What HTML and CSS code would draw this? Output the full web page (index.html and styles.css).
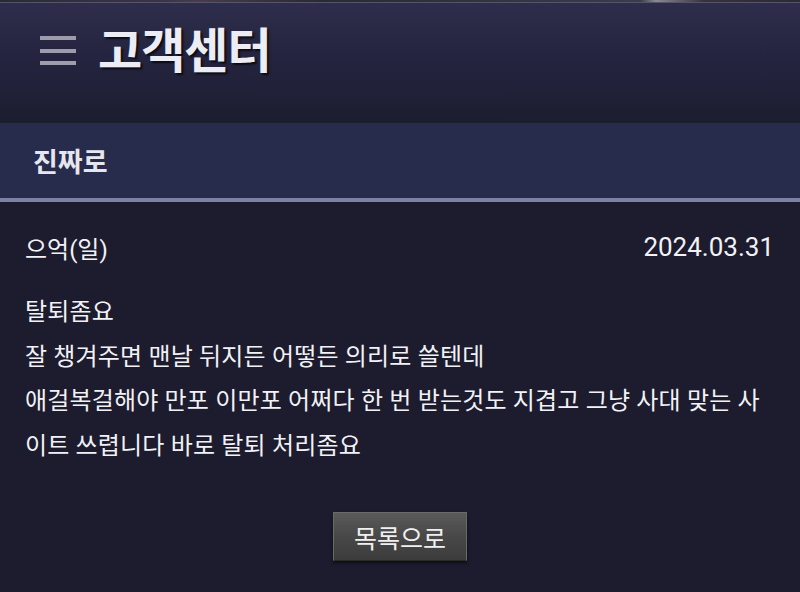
FILE: index.html
```html
<!DOCTYPE html>
<html lang="ko">
<head>
<meta charset="utf-8">
<link rel="stylesheet" href="styles.css">
</head>
<body>
<div class="topstrip"></div>
<header class="header">
  <div class="burger"><span></span><span></span><span></span></div>
  <h1 class="title">고객센터</h1>
</header>
<div class="titlebar"><h2>진짜로</h2></div>
<div class="meta">
  <span class="author">으억(일)</span>
  <span class="date">2024.03.31</span>
</div>
<div class="content">
  <p>탈퇴좀요</p>
  <p>잘 챙겨주면 맨날 뒤지든 어떻든 의리로 쓸텐데</p>
  <p>애걸복걸해야 만포 이만포 어쩌다 한 번 받는것도 지겹고 그냥 사대 맞는 사이트 쓰렵니다 바로 탈퇴 처리좀요</p>
</div>
<div class="actions"><button class="btn">목록으로</button></div>
</body>
</html>
```
FILE: styles.css
```css
* { box-sizing: border-box; }
html, body { margin: 0; padding: 0; }
body {
  width: 800px;
  height: 592px;
  overflow: hidden;
  background: #1c1c2e;
  color: #f2f2f6;
  font-family: Roboto, "Noto Sans CJK KR", sans-serif;
}
.topstrip {
  height: 3px;
  background: linear-gradient(90deg, #2a2a36 0%, #3a3546 20%, #4a3a4c 25%, #2a2a36 40%, #3b3b4a 80%, #8a8a94 82%, #3a3040 88%, #2a2a36 100%);
  border-bottom: 1px solid #55556a;
}
.header {
  height: 120px;
  background: linear-gradient(180deg, #2e2e4c 0%, #242440 45%, #1d1d30 100%);
  display: flex;
  align-items: flex-start;
  padding: 14px 0 0 40px;
}
.burger {
  width: 36px;
  display: flex;
  flex-direction: column;
  gap: 8.5px;
  margin-top: 19px;
}
.burger span {
  display: block;
  height: 4px;
  background: #9c9caa;
}
.title {
  margin: 0 0 0 22px;
  font-family: "Noto Sans CJK KR", sans-serif;
  font-size: 48px;
  font-weight: 700;
  line-height: 60px;
  color: #ececf4;
  letter-spacing: -1px;
  text-shadow: 2px 2px 2px rgba(0,0,0,0.7);
}
.titlebar {
  height: 79px;
  background: #272c4d;
  border-bottom: 4px solid #7c82a3;
  display: flex;
  align-items: center;
  padding: 0 0 0 33px;
}
.titlebar h2 {
  margin: 0;
  font-family: "Noto Sans CJK KR", sans-serif;
  font-size: 27px;
  font-weight: 700;
  color: #e6e6ee;
}
.meta {
  display: flex;
  justify-content: space-between;
  align-items: center;
  padding: 28px 26px 0 25px;
  height: 62px;
  font-size: 24px;
}
.date { font-size: 26px; }
.content {
  padding: 26px 30px 0 25px;
  font-size: 24px;
  line-height: 44.5px;
  letter-spacing: 0.17px;
}
.content p { margin: 0; }
.actions {
  display: flex;
  justify-content: center;
  padding-top: 44px;
}
.btn {
  width: 134px;
  height: 49px;
  background: linear-gradient(180deg, #5a5a5a 0%, #484848 50%, #3c3c3c 100%);
  border: 1px solid #6a6a6a;
  border-bottom-color: #2a2a2a;
  color: #f0f0f0;
  font-family: "Noto Sans CJK KR", sans-serif;
  font-size: 25px;
  box-shadow: 0 2px 3px rgba(0,0,0,0.6);
  padding: 0;
}
```
